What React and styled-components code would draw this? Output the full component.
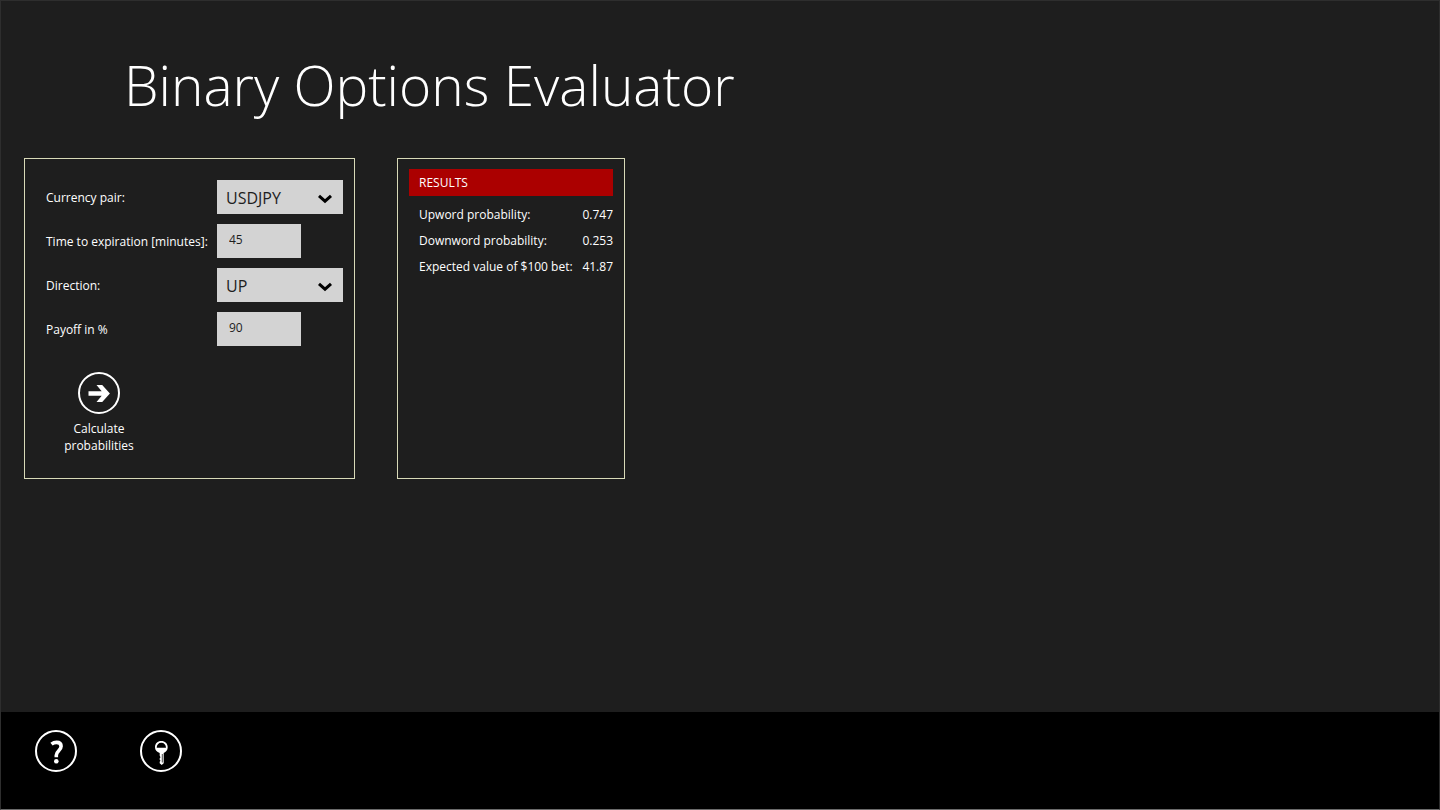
import React, { useState } from "react";
import styled, { createGlobalStyle } from "styled-components";

const GlobalStyle = createGlobalStyle`
  * {
    box-sizing: border-box;
  }

  body {
    margin: 0;
    background: #1e1e1e;
    color: #ffffff;
    font-family: "Open Sans", "Noto Sans", sans-serif;
    font-size: 12px;
    line-height: 16px;
  }
`;

const Page = styled.div`
  min-height: 100vh;
  display: flex;
  flex-direction: column;
  border: 1px solid #2e2e2e;
  border-bottom-color: #6b6b6b;
`;

const Content = styled.main`
  flex: 1;
  padding: 44px 23px 40px;
`;

const Title = styled.h1`
  margin: 0;
  padding-left: 100px;
  font-size: 55px;
  font-weight: 300;
  line-height: 80px;
`;

const Panels = styled.div`
  display: flex;
  flex-wrap: wrap;
  gap: 42px;
  margin-top: 33px;
`;

const Panel = styled.section`
  min-height: 321px;
  border: 1px solid #d8dab8;
`;

const FormPanel = styled(Panel)`
  padding: 21px 11px 21px 21px;
`;

const Fields = styled.form`
  display: grid;
  grid-template-columns: 161px 126px;
  gap: 10px;
  align-items: center;
`;

const Label = styled.label`
  padding-top: 2px;
  white-space: nowrap;
`;

const SelectBox = styled.div`
  display: grid;
  align-items: center;

  & > * {
    grid-area: 1 / 1;
  }

  svg {
    justify-self: end;
    margin: 4px 11px 0 0;
    pointer-events: none;
  }
`;

const Select = styled.select`
  appearance: none;
  width: 100%;
  height: 34px;
  padding: 2px 32px 0 9px;
  border: none;
  border-radius: 0;
  background: #d3d3d3;
  color: #1e1e1e;
  font-family: inherit;
  font-size: 16px;
`;

const Input = styled.input`
  width: 84px;
  height: 34px;
  padding: 0 12px 4px;
  border: none;
  background: #d3d3d3;
  color: #1e1e1e;
  font-family: inherit;
  font-size: 12px;
`;

const CalculateButton = styled.button`
  display: flex;
  flex-direction: column;
  align-items: center;
  gap: 6px;
  width: 106px;
  margin-top: 16px;
  padding: 0;
  border: none;
  background: none;
  color: #ffffff;
  font-family: inherit;
  font-size: 12px;
  line-height: 17px;
  cursor: pointer;
  grid-column: 1 / -1;
`;

const ResultsPanel = styled(Panel)`
  width: 228px;
  padding: 10px 11px;
`;

const ResultsTitle = styled.h2`
  margin: 0 0 6px;
  padding: 0 10px;
  background: #ab0000;
  font-size: 12px;
  font-weight: 400;
  line-height: 27px;
`;

const ResultsTable = styled.table`
  width: 100%;
  border-collapse: collapse;

  th,
  td {
    height: 26px;
    padding: 0;
    font-weight: 400;
    white-space: nowrap;
  }

  th {
    padding-left: 10px;
    text-align: left;
  }

  td {
    text-align: right;
  }
`;

const AppBar = styled.footer`
  display: flex;
  gap: 63px;
  min-height: 97px;
  padding: 18px 34px;
  background: #000000;
`;

const IconButton = styled.button`
  height: 42px;
  padding: 0;
  border: none;
  background: none;
  cursor: pointer;
`;

const Circle = ({ children }) => (
  <svg width="42" height="42" viewBox="0 0 42 42" fill="none" aria-hidden="true">
    <circle cx="21" cy="21" r="20" stroke="#fff" strokeWidth="2" />
    {children}
  </svg>
);

const Chevron = () => (
  <svg width="14" height="10" viewBox="0 0 14 10" fill="none" aria-hidden="true">
    <path d="M1 1.8 7 7.2 13 1.8" stroke="#000" strokeWidth="3" />
  </svg>
);

const SelectField = ({ id, label, options, value, onChange }) => (
  <>
    <Label htmlFor={id}>{label}</Label>
    <SelectBox>
      <Select id={id} value={value} onChange={(e) => onChange(e.target.value)}>
        {options.map((option) => (
          <option key={option}>{option}</option>
        ))}
      </Select>
      <Chevron />
    </SelectBox>
  </>
);

const InputField = ({ id, label, value, onChange }) => (
  <>
    <Label htmlFor={id}>{label}</Label>
    <Input id={id} value={value} onChange={(e) => onChange(e.target.value)} />
  </>
);

const results = [
  { name: "Upword probability:", value: "0.747" },
  { name: "Downword probability:", value: "0.253" },
  { name: "Expected value of $100 bet:", value: "41.87" },
];

export default function App() {
  const [pair, setPair] = useState("USDJPY");
  const [minutes, setMinutes] = useState("45");
  const [direction, setDirection] = useState("UP");
  const [payoff, setPayoff] = useState("90");

  return (
    <>
      <GlobalStyle />
      <Page>
        <Content>
          <Title>Binary Options Evaluator</Title>
          <Panels>
            <FormPanel>
              <Fields onSubmit={(e) => e.preventDefault()}>
                <SelectField
                  id="pair"
                  label="Currency pair:"
                  options={["USDJPY", "EURUSD", "GBPUSD"]}
                  value={pair}
                  onChange={setPair}
                />
                <InputField
                  id="minutes"
                  label="Time to expiration [minutes]:"
                  value={minutes}
                  onChange={setMinutes}
                />
                <SelectField
                  id="direction"
                  label="Direction:"
                  options={["UP", "DOWN"]}
                  value={direction}
                  onChange={setDirection}
                />
                <InputField
                  id="payoff"
                  label="Payoff in %"
                  value={payoff}
                  onChange={setPayoff}
                />
                <CalculateButton type="submit">
                  <Circle>
                    <path
                      d="M10.5 19.3h13.200l-5.200-6.300h5.700l7.700 8.500-7.700 8.500h-5.700l5.200-6.300h-13.200z"
                      fill="#fff"
                    />
                  </Circle>
                  <span>
                    Calculate
                    <br />
                    probabilities
                  </span>
                </CalculateButton>
              </Fields>
            </FormPanel>
            <ResultsPanel>
              <ResultsTitle>RESULTS</ResultsTitle>
              <ResultsTable>
                <tbody>
                  {results.map((result) => (
                    <tr key={result.name}>
                      <th scope="row">{result.name}</th>
                      <td>{result.value}</td>
                    </tr>
                  ))}
                </tbody>
              </ResultsTable>
            </ResultsPanel>
          </Panels>
        </Content>
        <AppBar>
          <IconButton type="button" aria-label="Help">
            <Circle>
              <path
                d="M16.500 14.200C18 13 19.800 12.400 21.600 12.400C24.500 12.400 26.100 13.900 26.100 16.300C26.100 20.600 21.300 20.800 21.300 25.300V27.300"
                stroke="#fff"
                strokeWidth="3.6"
              />
              <circle cx="21.3" cy="31.3" r="2.3" fill="#fff" />
            </Circle>
          </IconButton>
          <IconButton type="button" aria-label="Key">
            <Circle>
              <path
                fillRule="evenodd"
                d="M21.300 11c3.700 0 6.400 2.500 6.400 6.200 0 2.800-1.600 4.800-4 5.700v10.300l-2 1.700-2-1.700v-1.500l.8-1-.8-1v-1.500l.8-1-.8-1.500v-2.800c-2.900-.9-4.700-2.900-4.700-5.700 0-3.700 2.600-6.200 6.300-6.200zM16.700 17.800h9.300c0-3-1.900-5-4.700-5s-4.600 2-4.600 5z"
                fill="#fff"
              />
              <path d="M22.300 24v8.500" stroke="#000" strokeWidth="0.7" />
            </Circle>
          </IconButton>
        </AppBar>
      </Page>
    </>
  );
}
